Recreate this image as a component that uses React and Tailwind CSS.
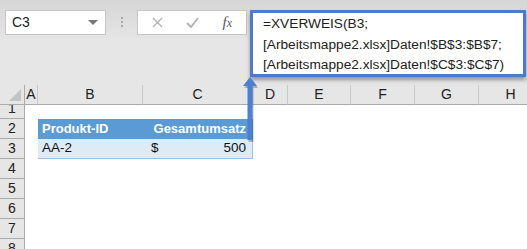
import React from "react";

const cols = [
  { name: "A", w: "w-[13px]" },
  { name: "B", w: "w-[105px]" },
  { name: "C", w: "w-[110px]" },
  { name: "D", w: "w-[35px]" },
  { name: "E", w: "w-[63px]" },
  { name: "F", w: "w-[64px]" },
  { name: "G", w: "w-[64px]" },
  { name: "H", w: "w-[64px]" },
];

const RowHead = ({ n, h = "h-[20px]" }) => (
  <div
    className={`${h} w-[25px] shrink-0 bg-[#e6e6e6] border-r border-b border-[#ababab] flex items-end justify-center pb-[1px] text-[14px] leading-[17px] text-[#222]`}
  >
    {n}
  </div>
);

const App = () => {
  return (
    <div
      className="w-[527px] h-[249px] overflow-hidden bg-white relative"
      style={{ fontFamily: '"Liberation Sans", Arial, sans-serif' }}
    >
      {/* formula bar area */}
      <div className="h-[85px] bg-[#e6e6e6] bg-gradient-to-b from-[#d6d6d6] via-[#e6e6e6] to-[#e6e6e6] flex items-start pt-[10px] pl-[5px]">
        <div className="w-[101px] h-[25px] shrink-0 bg-white border border-[#c6c6c6] flex items-center justify-between pl-[6px] pr-[7px]">
          <span className="text-[14px] text-[#222]">C3</span>
          <span className="w-0 h-0 border-l-[5px] border-r-[5px] border-t-[5px] border-l-transparent border-r-transparent border-t-[#777]" />
        </div>
        <div className="w-[3px] ml-[15px] mr-[13px] mt-[7px] flex flex-col gap-[2px] shrink-0">
          <span className="w-[2px] h-[2px] bg-[#aaa]" />
          <span className="w-[2px] h-[2px] bg-[#aaa]" />
          <span className="w-[2px] h-[2px] bg-[#aaa]" />
        </div>
        <div className="w-[110px] h-[25px] shrink-0 bg-white border border-[#c6c6c6] flex items-center pl-[14px] pr-[14px] justify-between">
          <svg width="11" height="11" viewBox="0 0 11 11">
            <path d="M1 1 L10 10 M10 1 L1 10" stroke="#b4b4b4" strokeWidth="1.4" />
          </svg>
          <svg width="13" height="11" viewBox="0 0 13 11">
            <path d="M1 6 L5 10 L12 1" stroke="#b4b4b4" strokeWidth="2" fill="none" />
          </svg>
          <span
            className="text-[15px] italic text-[#555] leading-none"
            style={{ fontFamily: '"Liberation Serif", "Times New Roman", serif' }}
          >
            f<span className="text-[12px]">x</span>
          </span>
        </div>
        <div className="ml-[3px] w-[276px] h-[67px] shrink-0 bg-white border-[3px] border-[#4d7acb] shadow-[0_3px_4px_rgba(0,0,0,0.35)] pl-[10px] pt-[1px] text-[13.7px] leading-[20.5px] text-[#222] whitespace-nowrap overflow-hidden">
          <div>=XVERWEIS(B3;</div>
          <div>[Arbeitsmappe2.xlsx]Daten!$B$3:$B$7;</div>
          <div>[Arbeitsmappe2.xlsx]Daten!$C$3:$C$7)</div>
        </div>
      </div>

      {/* column headers */}
      <div className="flex h-[20px]">
        <div className="w-[25px] shrink-0 bg-[#e6e6e6] border-r border-b border-[#ababab] relative">
          <svg className="absolute right-[3px] bottom-[3px]" width="12" height="12" viewBox="0 0 12 12">
            <path d="M12 0 L12 12 L0 12 Z" fill="#c4c4c4" />
          </svg>
        </div>
        {cols.map((c) => (
          <div
            key={c.name}
            className={`${c.w} shrink-0 bg-[#e6e6e6] border-r border-b border-[#c8c8c8] border-b-[#ababab] flex items-center justify-center text-[14px] text-[#222]`}
          >
            {c.name}
          </div>
        ))}
      </div>

      {/* rows */}
      <div className="flex">
        <RowHead n="1" h="h-[14px]" />
      </div>
      <div className="flex">
        <RowHead n="2" />
        <div className="w-[13px] shrink-0" />
        <div className="w-[105px] shrink-0 h-[20px] bg-[#5b9bd5] text-white font-bold text-[13px] flex items-center pl-[4px]">
          Produkt-ID
        </div>
        <div className="w-[110px] shrink-0 h-[20px] bg-[#5b9bd5] text-white font-bold text-[13px] flex items-center justify-end pr-[7px]">
          Gesamtumsatz
        </div>
      </div>
      <div className="flex">
        <RowHead n="3" />
        <div className="w-[13px] shrink-0" />
        <div className="w-[105px] shrink-0 h-[20px] bg-[#ddebf7] border-b border-[#9bc2e6] text-[13.5px] text-[#111] flex items-center pl-[4px]">
          AA-2
        </div>
        <div className="w-[110px] shrink-0 h-[20px] bg-[#ddebf7] border-b border-r border-[#9bc2e6] text-[13.5px] text-[#111] flex items-center justify-between pl-[8px] pr-[6px]">
          <span>$</span>
          <span>500</span>
        </div>
      </div>
      {["4", "5", "6", "7", "8"].map((n) => (
        <div key={n} className="flex">
          <RowHead n={n} />
        </div>
      ))}

      {/* arrow */}
      <svg className="absolute left-[238px] top-[74px]" width="26" height="72" viewBox="0 0 26 72">
        <path d="M13 5 L20 14 L15.5 14 L15.5 68 L10.5 68 L10.5 14 L6 14 Z" fill="rgba(0,0,0,0.25)" />
        <path d="M12 3 L19 12 L14.5 12 L14.5 66 L9.5 66 L9.5 12 L5 12 Z" fill="#4f7fd0" />
      </svg>
    </div>
  );
};

export default App;
